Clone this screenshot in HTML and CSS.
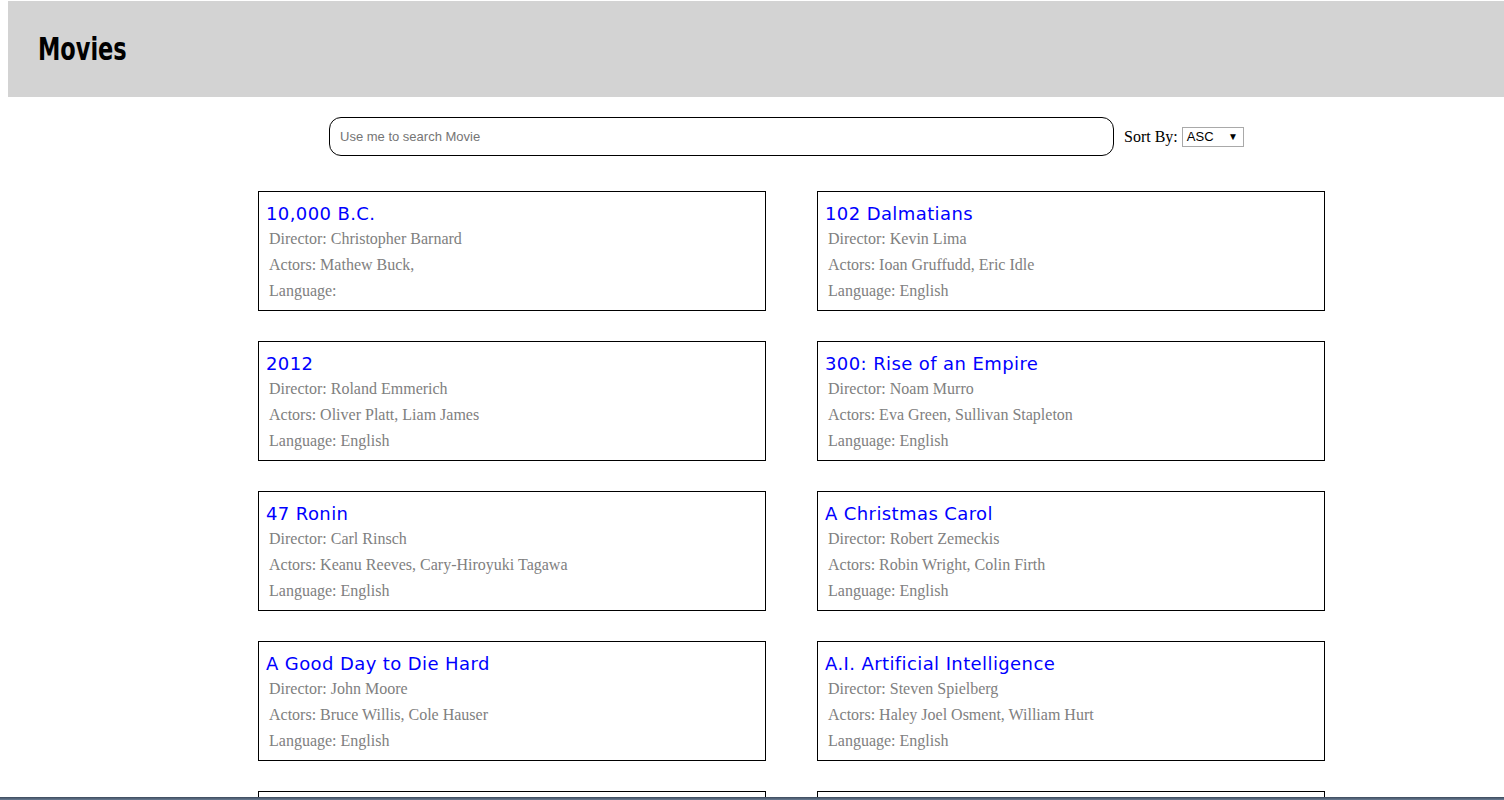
FILE: index.html
```html
<!DOCTYPE html>
<html>
<head>
<meta charset="utf-8">
<title>Movies</title>
<link rel="stylesheet" href="styles.css">
</head>
<body>
<header class="topbar"><h1 class="brand">Movies</h1></header>
<div class="toolbar">
  <input class="search" type="text" placeholder="Use me to search Movie">
  <label class="sort">Sort By:
    <span class="select"><span>ASC</span><span class="arrow">▼</span></span>
  </label>
</div>
<main class="grid">
  <div class="card"><div class="title">10,000 B.C.</div><p>Director: Christopher Barnard</p><p>Actors: Mathew Buck,</p><p>Language: </p></div>
  <div class="card"><div class="title">102 Dalmatians</div><p>Director: Kevin Lima</p><p>Actors: Ioan Gruffudd, Eric Idle</p><p>Language: English</p></div>
  <div class="card"><div class="title">2012</div><p>Director: Roland Emmerich</p><p>Actors: Oliver Platt, Liam James</p><p>Language: English</p></div>
  <div class="card"><div class="title">300: Rise of an Empire</div><p>Director: Noam Murro</p><p>Actors: Eva Green, Sullivan Stapleton</p><p>Language: English</p></div>
  <div class="card"><div class="title">47 Ronin</div><p>Director: Carl Rinsch</p><p>Actors: Keanu Reeves, Cary-Hiroyuki Tagawa</p><p>Language: English</p></div>
  <div class="card"><div class="title">A Christmas Carol</div><p>Director: Robert Zemeckis</p><p>Actors: Robin Wright, Colin Firth</p><p>Language: English</p></div>
  <div class="card"><div class="title">A Good Day to Die Hard</div><p>Director: John Moore</p><p>Actors: Bruce Willis, Cole Hauser</p><p>Language: English</p></div>
  <div class="card"><div class="title">A.I. Artificial Intelligence</div><p>Director: Steven Spielberg</p><p>Actors: Haley Joel Osment, William Hurt</p><p>Language: English</p></div>
  <div class="card"><div class="title">&nbsp;</div><p>&nbsp;</p><p>&nbsp;</p><p>&nbsp;</p></div>
  <div class="card"><div class="title">&nbsp;</div><p>&nbsp;</p><p>&nbsp;</p><p>&nbsp;</p></div>
</main>
<div class="taskbar"></div>
</body>
</html>
```
FILE: styles.css
```css
html, body { margin: 0; padding: 0; }
body {
  font-family: "Liberation Serif", "Times New Roman", serif;
  font-size: 16px;
  background: #fff;
  overflow: hidden;
}
.topbar {
  margin: 1px 0 0 8px;
  height: 96px;
  background: #d3d3d3;
  display: flex;
  align-items: center;
  padding-left: 30px;
}
.brand {
  margin: 0;
  font-family: "DejaVu Sans", sans-serif;
  font-stretch: condensed;
  font-weight: bold;
  font-size: 32px;
  color: #000;
  transform-origin: left center;
  transform: scale(0.78, 1.02);
}
.toolbar {
  display: flex;
  align-items: center;
  margin: 20px 0 0 329px;
  gap: 10px;
}
.search {
  box-sizing: border-box;
  width: 785px;
  height: 39px;
  border: 1px solid #000;
  border-radius: 12px;
  padding: 0 10px;
  font-family: "Liberation Sans", Arial, sans-serif;
  font-size: 13px;
  outline: none;
}
.search::placeholder { color: #757575; }
.sort {
  display: flex;
  align-items: center;
  gap: 4px;
  font-size: 16px;
  color: #000;
}
.select {
  box-sizing: border-box;
  width: 62px;
  height: 20px;
  border: 1px solid #a9a9a9;
  display: flex;
  align-items: center;
  justify-content: space-between;
  padding: 0 5px 0 4px;
  font-family: "Liberation Sans", Arial, sans-serif;
  font-size: 13px;
}
.arrow { font-size: 10px; color: #000; }
.grid {
  display: grid;
  grid-template-columns: 508px 508px;
  column-gap: 51px;
  row-gap: 30px;
  margin: 35px 0 0 258px;
}
.card {
  box-sizing: border-box;
  height: 120px;
  border: 1px solid #000;
  padding: 10px 0 0 6px;
}
.title {
  font-family: "Comic Sans MS", "DejaVu Sans", sans-serif;
  font-size: 18px;
  color: #0000ff;
  line-height: 24px;
  height: 24px;
  padding-left: 1px;
  letter-spacing: 0.4px;
}
.card p {
  margin: 0;
  padding-left: 4px;
  color: #808080;
  line-height: 26px;
  height: 26px;
}
.taskbar {
  position: fixed;
  left: 0; right: 0; bottom: 0;
  height: 3px;
  background: linear-gradient(#3c4a5c, #6a7d94);
}
```
